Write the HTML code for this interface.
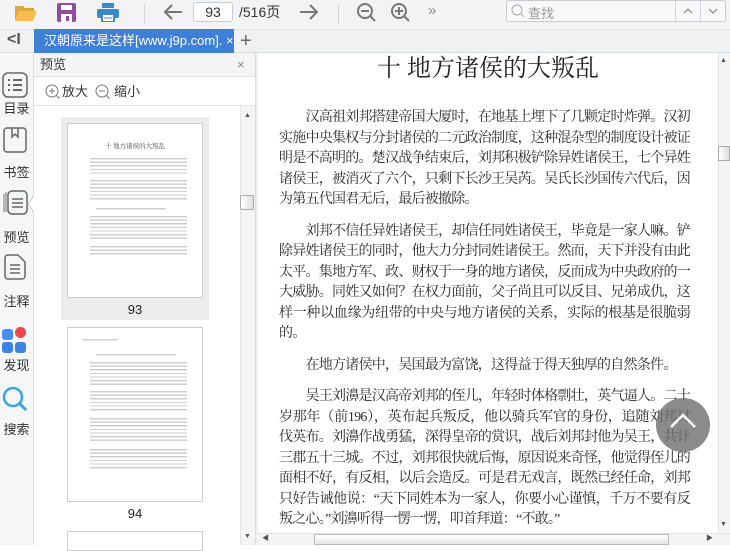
<!DOCTYPE html>
<html><head><meta charset="utf-8"><style>
*{margin:0;padding:0;box-sizing:border-box}
body{width:730px;height:545px;overflow:hidden;background:#fff;font-family:"Liberation Sans","Noto Sans CJK SC",sans-serif;position:relative;color:#333}
.a{position:absolute}
.tb{left:0;top:0;width:730px;height:29px;background:#f2f3f5}
.tabbar{left:0;top:29px;width:730px;height:24px;background:#f0f1f3;border-top:1px solid #e2e4e8;border-bottom:1px solid #d8dbe0}
.side{left:0;top:53px;width:34px;height:492px;background:#f5f6f8;border-right:1px solid #dcdfe4}
.lbl{left:0;width:33px;text-align:center;font-size:13px;color:#333}
.prev{left:34px;top:53px;width:222px;height:492px;background:#fff;border-right:1px solid #d8dbe0}
.thl{position:absolute;left:22px;width:97px;background:repeating-linear-gradient(#fff 0,#fff 1px,#c8c8c8 1px,#d6d6d6 2.3px,#fff 2.3px,#fff 3.6px)}
.main{left:258px;top:53px;width:460px;height:480px;background:#fff}
.txt{position:absolute;left:21px;width:411px;font-family:"Liberation Serif","Noto Serif CJK SC",serif;font-size:14px;letter-spacing:-0.75px;line-height:20.5px;color:#2a2a2a}
.txt div{white-space:nowrap;text-align:justify;text-align-last:justify;height:20.5px}
.txt div.l{text-align-last:left}
.i{padding-left:26.5px}
</style></head><body>
<div class="a tb"></div>
<svg class="a" style="left:14px;top:3px" width="24" height="20"><path d="M1 3h8l2 2h9v3H5L1 18z" fill="#e0a83a"/><path d="M5 8h18l-4 10H1z" fill="#f3bd4f"/></svg>
<svg class="a" style="left:57px;top:3px" width="19" height="19"><rect x="0" y="0" width="19" height="19" rx="2" fill="#8e4d9e"/><rect x="4" y="2" width="11" height="5" fill="#fff"/><rect x="4" y="11" width="11" height="8" fill="#fff"/><rect x="9" y="13" width="3" height="5" fill="#8e4d9e"/></svg>
<svg class="a" style="left:97px;top:3px" width="22" height="19"><rect x="5" y="0" width="12" height="5" fill="#3e88c5"/><rect x="0" y="6" width="22" height="9" rx="2" fill="#3e88c5"/><rect x="5" y="11" width="12" height="8" fill="#fff" stroke="#3e88c5" stroke-width="2"/><line x1="7" y1="15" x2="15" y2="15" stroke="#3e88c5"/></svg>
<div class="a" style="left:144px;top:4px;width:1px;height:20px;background:#d0d3d8"></div>
<svg class="a" style="left:163px;top:3px" width="20" height="18"><path d="M19 9H2M9 2L2 9l7 7" stroke="#777" stroke-width="2" fill="none"/></svg>
<div class="a" style="left:193px;top:2px;width:40px;height:20px;border:1px solid #c8ccd2;border-radius:3px;background:#fff;font-size:14px;text-align:center;line-height:18px;color:#333">93</div>
<div class="a" style="left:239px;top:3px;font-size:14px;color:#333;line-height:18px">/516页</div>
<svg class="a" style="left:299px;top:3px" width="20" height="18"><path d="M1 9h17M11 2l7 7-7 7" stroke="#777" stroke-width="2" fill="none"/></svg>
<div class="a" style="left:338px;top:4px;width:1px;height:20px;background:#d0d3d8"></div>
<svg class="a" style="left:356px;top:2px" width="22" height="22"><circle cx="9" cy="9" r="7" stroke="#777" stroke-width="2" fill="none"/><path d="M5 9h8M14 14l5 5" stroke="#777" stroke-width="2"/></svg>
<svg class="a" style="left:390px;top:2px" width="22" height="22"><circle cx="9" cy="9" r="7" stroke="#777" stroke-width="2" fill="none"/><path d="M5 9h8M9 5v8M14 14l5 5" stroke="#777" stroke-width="2"/></svg>
<div class="a" style="left:428px;top:2px;font-size:15px;color:#888">»</div>
<div class="a" style="left:506px;top:0px;width:220px;height:22px;border:1px solid #c8ccd2;border-radius:3px;background:#f7f8f9"></div>
<svg class="a" style="left:511px;top:4px" width="14" height="14"><circle cx="6" cy="6" r="5" stroke="#aaa" fill="none"/><path d="M9.5 9.5l3.5 3.5" stroke="#aaa"/></svg>
<div class="a" style="left:528px;top:3px;font-size:13px;color:#999">查找</div>
<div class="a" style="left:675px;top:1px;width:1px;height:20px;background:#d0d3d8"></div>
<div class="a" style="left:700px;top:1px;width:1px;height:20px;background:#d0d3d8"></div>
<svg class="a" style="left:683px;top:8px" width="10" height="6"><path d="M1 5l4-4 4 4" stroke="#777" fill="none"/></svg>
<svg class="a" style="left:708px;top:8px" width="10" height="6"><path d="M1 1l4 4 4-4" stroke="#777" fill="none"/></svg>

<div class="a tabbar"></div>
<div class="a" style="left:7px;top:31px;font-size:16px;color:#555;font-weight:bold">&lt;I</div>
<div class="a" style="left:34px;top:29px;width:200px;height:24px;background:#3f7fd6;color:#fff;font-size:13px;line-height:24px;padding-left:10px;white-space:nowrap">汉朝原来是这样[www.j9p.com]. ×</div>
<div class="a" style="left:240px;top:29px;font-size:20px;color:#666;line-height:24px">+</div>

<div class="a side"></div>
<svg class="a" style="left:2px;top:72px" width="26" height="26"><rect x="1" y="1" width="24" height="24" rx="5" stroke="#666" stroke-width="1.5" fill="none"/><path d="M6 8h2M11 8h9M6 13h2M11 13h9M6 18h2M11 18h9" stroke="#666" stroke-width="2"/></svg>
<div class="a lbl" style="top:98px">目录</div>
<svg class="a" style="left:3px;top:127px" width="24" height="26"><rect x="1" y="1" width="22" height="24" rx="3" stroke="#666" stroke-width="1.5" fill="none"/><path d="M9 1v9l3-3 3 3V1" stroke="#666" stroke-width="1.5" fill="none"/></svg>
<div class="a lbl" style="top:162px">书签</div>
<svg class="a" style="left:2px;top:189px" width="26" height="26"><path d="M2 5v18M4 3v20" stroke="#777" fill="none"/><rect x="6" y="2" width="19" height="23" rx="4" stroke="#666" stroke-width="1.5" fill="#f5f6f8"/><path d="M10 10h11M10 14h11M10 18h11" stroke="#666" stroke-width="1.5"/></svg>
<svg class="a" style="left:27px;top:196px" width="8" height="16"><path d="M7 0L1 8l6 8" stroke="#ccc" fill="#fff"/></svg>
<div class="a lbl" style="top:227px">预览</div>
<svg class="a" style="left:4px;top:254px" width="22" height="26"><path d="M1 4a3 3 0 013-3h10l7 7v14a3 3 0 01-3 3H4a3 3 0 01-3-3z" stroke="#666" stroke-width="1.5" fill="none"/><path d="M6 11h10M6 15h10M6 19h10" stroke="#666" stroke-width="1.5"/></svg>
<div class="a lbl" style="top:291px">注释</div>
<div class="a" style="left:2px;top:329px;width:11px;height:11px;border-radius:3px;background:#4a8fe6"></div>
<div class="a" style="left:15px;top:327px;width:11px;height:11px;border-radius:50%;background:#f0454a"></div>
<div class="a" style="left:2px;top:342px;width:11px;height:11px;border-radius:3px;background:#3b84e0"></div>
<div class="a" style="left:15px;top:342px;width:11px;height:11px;border-radius:3px;background:#3b84e0"></div>
<div class="a lbl" style="top:355px">发现</div>
<svg class="a" style="left:2px;top:386px" width="26" height="26"><circle cx="11" cy="11" r="9" stroke="#3aa3df" stroke-width="2.5" fill="none"/><path d="M17 17l7 7" stroke="#3aa3df" stroke-width="3"/></svg>
<div class="a lbl" style="top:419px">搜索</div>

<div class="a prev">
 <div class="a" style="left:0;top:0;width:221px;height:24px;background:#f3f4f6;border-bottom:1px solid #dcdfe4;font-size:13px;line-height:24px;padding-left:6px">预览<span style="position:absolute;left:203px;color:#888">×</span></div>
 <div class="a" style="left:0;top:24px;width:221px;height:29px;border-bottom:1px solid #e0e2e6;font-size:13px;line-height:29px;padding-left:28px">放大　　缩小</div>
 <svg class="a" style="left:11px;top:31px" width="16" height="16"><circle cx="7" cy="7" r="6" stroke="#777" fill="none"/><path d="M4 7h6M7 4v6M11.5 11.5l3 3" stroke="#777"/></svg>
 <svg class="a" style="left:61px;top:31px" width="16" height="16"><circle cx="7" cy="7" r="6" stroke="#777" fill="none"/><path d="M4 7h6M11.5 11.5l3 3" stroke="#777"/></svg>
 <div class="a" style="left:27px;top:64px;width:148px;height:203px;background:#ececec"></div>
 <div class="a" style="left:33px;top:70px;width:136px;height:175px;background:#fff;border:1px solid #ccc">
  <div class="a" style="left:0;width:134px;top:17px;text-align:center;font-family:'Liberation Serif','Noto Serif CJK SC',serif;font-size:6.5px;color:#444">十 地方诸侯的大叛乱</div>
  <div class="thl" style="top:33px;height:18px"></div>
  <div class="thl" style="top:55px;height:22px"></div>
  <div class="thl" style="top:83px;height:3px;width:70px;left:28px"></div>
  <div class="thl" style="top:91px;height:25px"></div>
  <div class="thl" style="top:121px;height:11px"></div>
 </div>
 <div class="a" style="left:27px;top:249px;width:148px;text-align:center;font-size:13px;color:#222">93</div>
 <div class="a" style="left:33px;top:274px;width:136px;height:175px;background:#fff;border:1px solid #ccc">
  <div class="thl" style="top:10px;height:3px;width:35px;left:15px"></div>
  <div class="thl" style="top:25px;height:3px;width:80px;left:28px"></div>
  <div class="thl" style="top:33px;height:25px"></div>
  <div class="thl" style="top:62px;height:22px"></div>
  <div class="thl" style="top:89px;height:25px"></div>
  <div class="thl" style="top:120px;height:22px"></div>
 </div>
 <div class="a" style="left:27px;top:453px;width:148px;text-align:center;font-size:13px;color:#222">94</div>
 <div class="a" style="left:33px;top:478px;width:136px;height:20px;background:#fff;border:1px solid #ccc"></div>
 <div class="a" style="left:206px;top:53px;width:15px;height:439px;background:#f4f4f4;border-left:1px solid #e4e4e4"></div>
 <div class="a" style="left:210px;top:59px;font-size:7px;color:#555">▲</div>
 <div class="a" style="left:210px;top:480px;font-size:7px;color:#555">▼</div>
 <div class="a" style="left:206px;top:142px;width:14px;height:15px;background:linear-gradient(90deg,#fff,#ddd);border:1px solid #aaa;border-radius:2px"></div>
</div>
<div class="a" style="left:256px;top:53px;width:2px;height:492px;background:#eef0f2"></div>

<div class="a main">
 <div class="a" style="left:0;top:2px;width:460px;text-align:center;font-family:'Liberation Serif','Noto Serif CJK SC',serif;font-size:24px;color:#222;line-height:28px">十 地方诸侯的大叛乱</div>
 <div class="txt" style="top:55px">
  <div class="i">汉高祖刘邦搭建帝国大厦时，在地基上埋下了几颗定时炸弹。汉初</div>
  <div>实施中央集权与分封诸侯的二元政治制度，这种混杂型的制度设计被证</div>
  <div>明是不高明的。楚汉战争结束后，刘邦积极铲除异姓诸侯王，七个异姓</div>
  <div>诸侯王，被消灭了六个，只剩下长沙王吴芮。吴氏长沙国传六代后，因</div>
  <div class="l">为第五代国君无后，最后被撤除。</div>
 </div>
 <div class="txt" style="top:168.5px">
  <div class="i">刘邦不信任异姓诸侯王，却信任同姓诸侯王，毕竟是一家人嘛。铲</div>
  <div>除异姓诸侯王的同时，他大力分封同姓诸侯王。然而，天下并没有由此</div>
  <div>太平。集地方军、政、财权于一身的地方诸侯，反而成为中央政府的一</div>
  <div>大威胁。同姓又如何？在权力面前，父子尚且可以反目、兄弟成仇，这</div>
  <div>样一种以血缘为纽带的中央与地方诸侯的关系，实际的根基是很脆弱</div>
  <div class="l">的。</div>
 </div>
 <div class="txt" style="top:302.5px">
  <div class="i l">在地方诸侯中，吴国最为富饶，这得益于得天独厚的自然条件。</div>
 </div>
 <div class="txt" style="top:334px">
  <div class="i">吴王刘濞是汉高帝刘邦的侄儿，年轻时体格剽壮，英气逼人。二十</div>
  <div>岁那年（前196），英布起兵叛反，他以骑兵军官的身份，追随刘邦讨</div>
  <div>伐英布。刘濞作战勇猛，深得皇帝的赏识，战后刘邦封他为吴王，共计</div>
  <div>三郡五十三城。不过，刘邦很快就后悔，原因说来奇怪，他觉得侄儿的</div>
  <div>面相不好，有反相，以后会造反。可是君无戏言，既然已经任命，刘邦</div>
  <div>只好告诫他说：“天下同姓本为一家人，你要小心谨慎，千万不要有反</div>
  <div class="l">叛之心。”刘濞听得一愣一愣，叩首拜道：“不敢。”</div>
 </div>
 <div class="a" style="left:398px;top:345px;width:54px;height:54px;border-radius:50%;background:rgba(110,110,110,0.8)"></div>
 <svg class="a" style="left:410px;top:357px" width="30" height="20"><path d="M3 17L15 5l12 12" stroke="#fff" stroke-width="2.5" fill="none"/></svg>
</div>
<div class="a" style="left:718px;top:53px;width:12px;height:480px;background:#f4f4f4;border-left:1px solid #e4e4e4"></div>
<div class="a" style="left:720px;top:57px;font-size:7px;color:#555">▲</div>
<div class="a" style="left:720px;top:521px;font-size:7px;color:#555">▼</div>
<div class="a" style="left:718px;top:146px;width:12px;height:15px;background:linear-gradient(90deg,#fff,#ddd);border:1px solid #aaa"></div>
<div class="a" style="left:258px;top:533px;width:472px;height:12px;background:#f4f4f4;border-top:1px solid #e4e4e4"></div>
<div class="a" style="left:314px;top:534px;width:355px;height:11px;background:linear-gradient(#fff,#e4e4e4);border:1px solid #bbb"></div>
<div class="a" style="left:262px;top:533px;font-size:7px;color:#555">◀</div>
<div class="a" style="left:706px;top:533px;font-size:7px;color:#555">▶</div>
</body></html>
